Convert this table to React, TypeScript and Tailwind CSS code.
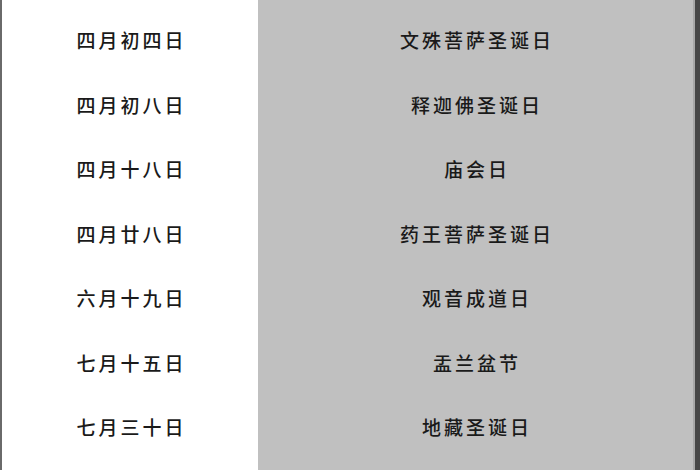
const rows: [string, string][] = [
  ['四月初四日', '文殊菩萨圣诞日'],
  ['四月初八日', '释迦佛圣诞日'],
  ['四月十八日', '庙会日'],
  ['四月廿八日', '药王菩萨圣诞日'],
  ['六月十九日', '观音成道日'],
  ['七月十五日', '盂兰盆节'],
  ['七月三十日', '地藏圣诞日'],
]

export default function App() {
  return (
    <div
      className="flex h-[470px] w-[700px] bg-white text-[#1a1a1a]"
      style={{ fontFamily: '"Noto Sans CJK SC", "Noto Sans", sans-serif' }}
    >
      <div className="w-[2px] bg-[#6a6a6a]" />
      <div className="w-[256px] bg-white pt-2">
        {rows.map(([d]) => (
          <div key={d} className="flex h-[64.5px] items-center justify-center pl-[3px] text-[19px] font-medium tracking-[3px]">
            {d}
          </div>
        ))}
      </div>
      <div className="flex-1 bg-[#c0c0c0] pt-2">
        {rows.map(([d, name]) => (
          <div key={d} className="flex h-[64.5px] items-center justify-center pl-[3px] text-[19px] font-medium tracking-[3px]">
            {name}
          </div>
        ))}
      </div>
      <div className="w-[2px] bg-[#a8a8a8]" />
      <div className="w-[5px] bg-[#474747]" />
    </div>
  )
}
